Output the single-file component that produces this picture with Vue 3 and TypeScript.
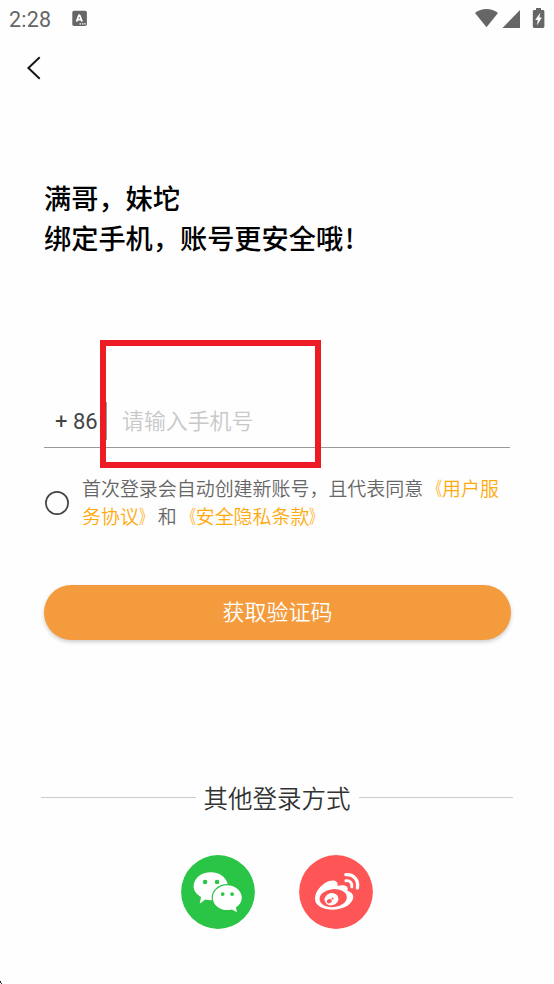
<script setup lang="ts">
import { ref } from 'vue'

const phone = ref('')
const agreed = ref(false)
</script>

<template>
  <div class="screen">
    <header class="status">
      <span class="time">2:28</span>
      <svg class="app-badge" width="16" height="17" viewBox="0 0 16 17">
        <rect x="0.3" y="0.7" width="14.6" height="15.4" rx="1.8" fill="#666" />
        <path d="M4.500 11.600 6.900 5.200H7.700L10.100 11.600M5.500 9.600h3.600" fill="none" stroke="#fff" stroke-width="1.700" stroke-linejoin="bevel" />
        <path d="M7.500 13.900h1.500M10 13.900h1.500M12.300 13.900h1.400" stroke="#fff" stroke-width="1.200" />
      </svg>
      <svg class="signals" width="72" height="30" viewBox="0 0 72 30">
        <path d="M1 13C7.500 7.700 17.500 7.700 24 13L12.500 27.200Z" fill="#666" />
        <path d="M46 10v18H28.500Z" fill="#666" />
        <path d="M62 8h5v2h2a1.400 1.400 0 0 1 1.400 1.400v15.200a1.400 1.400 0 0 1-1.400 1.400h-8.800a1.400 1.400 0 0 1-1.400-1.400V11.400A1.400 1.400 0 0 1 60.200 10H62Z" fill="#666" />
        <path d="M66.400 12.600 61.200 20h2.600l-.9 5.400 5-7.800h-2.600Z" fill="#fff" />
      </svg>
    </header>

    <nav class="nav">
      <button class="back" aria-label="返回">
        <svg width="16" height="24" viewBox="0 0 16 24">
          <path d="M13.700 1.200 2.400 12 13.700 22.700" fill="none" stroke="#161616" stroke-width="2" />
        </svg>
      </button>
    </nav>

    <main class="content">
      <h1 class="title">满哥，妹坨<br />绑定手机，账号更安全哦<span class="mark">!</span></h1>

      <div class="phone-row">
        <span class="code">+ 86</span>
        <span class="divider"></span>
        <input v-model="phone" class="phone" type="tel" placeholder="请输入手机号" />
        <span class="highlight"></span>
      </div>

      <div class="terms">
        <button class="radio" :aria-pressed="agreed" aria-label="同意" @click="agreed = !agreed">
          <svg width="24" height="24" viewBox="0 0 24 24">
            <circle cx="12" cy="12" r="11.100" fill="none" stroke="#444" stroke-width="1.700" />
          </svg>
        </button>
        <p class="terms-text">首次登录会自动创建新账号，且代表同意<a><span class="open">《</span>用户服<br />务协议<span class="close">》</span></a>和<a><span class="open">《</span>安全隐私条款<span class="close">》</span></a></p>
      </div>

      <button class="submit">获取验证码</button>
    </main>

    <section class="others">
      <div class="others-head">
        <span class="rule"></span>
        <span class="others-label">其他登录方式</span>
        <span class="rule"></span>
      </div>
      <div class="socials">
        <svg width="74" height="74" viewBox="0 0 74 74">
          <circle cx="37" cy="37" r="36.900" fill="#2ac447" />
          <path d="M29.700 17.300c9.500 0 17.200 6.200 17.200 14s-7.700 14-17.200 14c-1.900 0-3.700-.2-5.400-.7l-5.600 4.100 1.400-6.700c-4.500-2.500-7.500-6.300-7.500-10.700 0-7.800 7.600-14 17.100-14Z" fill="#fff" />
          <ellipse cx="46.300" cy="42.700" rx="15.700" ry="13.700" fill="#2ac447" />
          <path d="M46.300 30.200c8 0 14.500 5.600 14.500 12.500 0 3.900-2.300 7.400-5.900 9.700l1.100 4.900-5-2.900c-1.500.5-3 .7-4.700.7-8 0-14.500-5.600-14.500-12.400s6.500-12.500 14.500-12.500Z" fill="#fff" />
          <g fill="#2ac447">
            <circle cx="24.100" cy="27" r="2.300" /><circle cx="36.100" cy="27" r="2.300" />
            <circle cx="41.700" cy="39.100" r="1.900" /><circle cx="51.100" cy="39.100" r="1.900" />
          </g>
        </svg>
        <svg width="74" height="74" viewBox="0 0 74 74">
          <circle cx="37" cy="37" r="36.900" fill="#fe5656" />
          <path d="M16 43.500c.2-6.800 5.500-12.600 10.500-15.700 4.600-2.800 9.900-3 11.500-.4.700 1.100.8 2.500.6 3.700 3.700-1.300 8-1.500 9.600 1 .8 1.300.7 2.600.2 4 3.400.8 5.900 3 5.900 6 0 6.200-9.100 12.600-20 12.600-10.600 0-18.500-4.200-18.300-11.200Z" fill="#fff" />
          <ellipse cx="34.200" cy="43.100" rx="13.700" ry="9" transform="rotate(-6 34.200 43.100)" fill="#fe5656" />
          <ellipse cx="32.500" cy="44.200" rx="7" ry="6.100" transform="rotate(-15 32.500 44.200)" fill="#fff" />
          <ellipse cx="30.300" cy="46.200" rx="2.600" ry="2.100" transform="rotate(-25 30.300 46.200)" fill="#fe5656" />
          <circle cx="33.600" cy="43.500" r="1" fill="#fe5656" />
          <g fill="none" stroke="#fff" stroke-linecap="round">
            <path d="M46.900 19.700c7.300-1.200 13.200 5.600 11.500 13.300" stroke-width="3.300" />
            <path d="M46.900 25.700c4-.6 6.700 2.500 5.900 6.200" stroke-width="2.900" />
          </g>
        </svg>
      </div>
    </section>
    <svg class="corner" width="2" height="3" viewBox="0 0 2 3">
      <path d="M0 0h1v2H0zM1 2h1v1H1z" fill="#222" />
    </svg>
  </div>
</template>

<style>
body {
  margin: 0;
  background: #fff;
}
</style>

<style scoped>
.screen {
  position: relative;
  box-sizing: border-box;
  width: 554px;
  height: 984px;
  overflow: hidden;
  background: #fefefe;
  font-family: Roboto, "Noto Sans CJK SC", sans-serif;
}
button {
  padding: 0;
  border: 0;
  background: none;
  font-family: inherit;
}
.status {
  display: flex;
  align-items: flex-start;
  height: 40px;
  padding-left: 9px;
}
.time {
  width: 62.500px;
  padding-top: 7px;
  color: #666;
  font-size: 21.500px;
  line-height: 25px;
  letter-spacing: 0.200px;
}
.app-badge {
  margin-top: 10px;
}
.signals {
  margin-left: auto;
  margin-right: 8px;
}
.nav {
  display: flex;
  align-items: flex-start;
  height: 137px;
}
.back {
  display: block;
  height: 24px;
  margin: 16px 0 0 26px;
}
.back svg,
.radio svg {
  display: block;
}
.content {
  padding: 0 44px;
}
.title {
  height: 208px;
  margin: 0;
  color: #000;
  font-family: "Noto Sans CJK SC", sans-serif;
  font-size: 27.200px;
  font-weight: 500;
  line-height: 40px;
  white-space: nowrap;
}
.mark {
  margin-left: 2px;
}
.phone-row {
  position: relative;
  display: flex;
  align-items: center;
  box-sizing: border-box;
  width: 466px;
  height: 63px;
  padding: 10px 0 0 11px;
  border-bottom: 1px solid #999;
}
.code {
  width: 51px;
  color: #444;
  font-size: 22px;
  white-space: nowrap;
}
.divider {
  width: 1px;
  height: 38px;
  background: #999;
}
.phone {
  width: 300px;
  margin-left: 15px;
  padding: 0 0 3px;
  border: 0;
  outline: 0;
  background: transparent;
  color: #444;
  font-family: "Noto Sans CJK SC", sans-serif;
  font-size: 21.900px;
  font-weight: 350;
}
.phone::placeholder {
  color: #c8c8c8;
}
.highlight {
  position: absolute;
  left: 56px;
  top: -45px;
  box-sizing: border-box;
  width: 221px;
  height: 128px;
  border: 6px solid #ed1c24;
}
.terms {
  display: flex;
  align-items: center;
  width: 466px;
  height: 56px;
  margin-top: 26px;
}
.radio {
  width: 24px;
  height: 24px;
  margin: 1px 13px 0 1px;
}
.terms-text {
  margin: 0;
  color: #666;
  font-family: "Noto Sans CJK SC", sans-serif;
  font-size: 18.970px;
  font-weight: 350;
  line-height: 28px;
  white-space: nowrap;
}
.terms-text a {
  color: #ffaa0c;
}
.open,
.close {
  display: inline-block;
  transform: scaleX(0.700);
}
.open {
  transform-origin: 100% 50%;
}
.close {
  transform-origin: 0 50%;
}
.submit {
  display: block;
  width: 467px;
  height: 55px;
  margin-top: 55px;
  padding-bottom: 5px;
  border-radius: 28px;
  background: #f49b3d;
  box-shadow: 0 2px 4px rgba(0, 0, 0, 0.200);
  color: #fff;
  font-family: "Noto Sans CJK SC", sans-serif;
  font-size: 22px;
  font-weight: 350;
}
.others {
  padding: 137px 41px 0;
}
.others-head {
  display: flex;
  align-items: center;
  gap: 8px;
  height: 40px;
}
.rule {
  flex: 1;
  height: 1px;
  background: #ccc;
}
.others-label {
  padding-top: 2px;
  color: #333;
  font-family: "Noto Sans CJK SC", sans-serif;
  font-size: 24.500px;
  font-weight: 350;
  line-height: 38px;
}
.socials {
  display: flex;
  justify-content: center;
  gap: 44px;
  margin-top: 38px;
}
.corner {
  position: absolute;
  left: 0;
  bottom: 0;
}
</style>
